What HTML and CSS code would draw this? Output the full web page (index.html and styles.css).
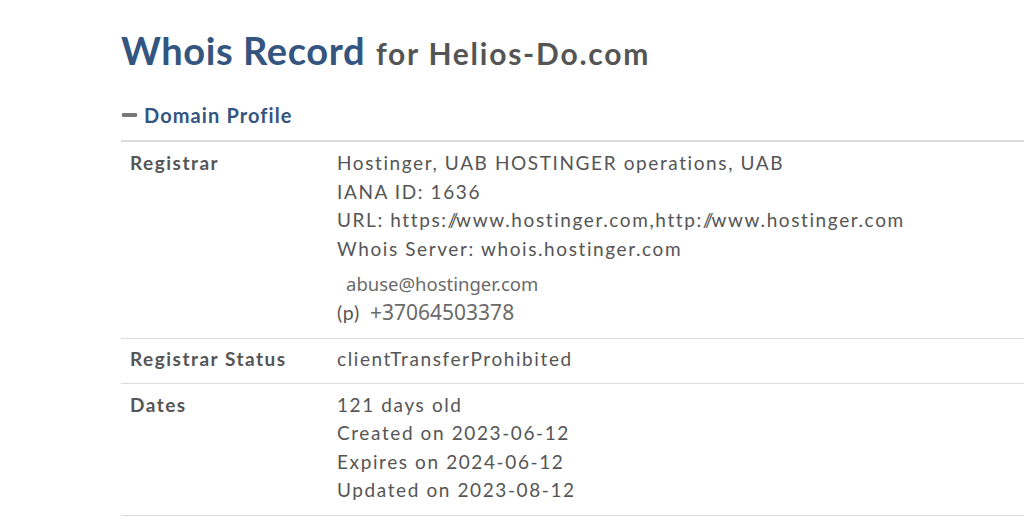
FILE: index.html
```html
<!DOCTYPE html>
<html>
<head>
<meta charset="utf-8">
<link rel="stylesheet" href="styles.css">
</head>
<body>
<div class="page">
  <h1 class="title"><span class="title-main">Whois Record</span> <span class="title-sub">for Helios-Do.com</span></h1>
  <div class="section-head"><span class="dash"></span><span class="section-name">Domain Profile</span></div>
  <div class="table">
    <div class="row row-first">
      <div class="label">Registrar</div>
      <div class="value">
        <div class="line">Hostinger, UAB HOSTINGER operations, UAB</div>
        <div class="line">IANA ID: 1636</div>
        <div class="line">URL: https:<span class="sl">//</span>www.hostinger.com,http:<span class="sl">//</span>www.hostinger.com</div>
        <div class="line">Whois Server: whois.hostinger.com</div>
        <div class="contact email">abuse@hostinger.com</div>
        <div class="contact phone"><span class="p">(p)</span><span class="num">+37064503378</span></div>
      </div>
    </div>
    <div class="row">
      <div class="label">Registrar Status</div>
      <div class="value"><div class="line">clientTransferProhibited</div></div>
    </div>
    <div class="row row-last">
      <div class="label">Dates</div>
      <div class="value">
        <div class="line">121 days old</div>
        <div class="line">Created on 2023-06-12</div>
        <div class="line">Expires on 2024-06-12</div>
        <div class="line">Updated on 2023-08-12</div>
      </div>
    </div>
  </div>
</div>
</body>
</html>
```
FILE: styles.css
```css
html, body {
  margin: 0;
  padding: 0;
  background: #fff;
}
body {
  font-family: Lato, "Liberation Sans", sans-serif;
  color: #555;
  overflow: hidden;
}
.page {
  padding: 26px 0 0 121px;
}
.title {
  margin: 0;
  line-height: 48px;
  font-weight: 700;
  white-space: nowrap;
}
.title-main {
  font-size: 38px;
  letter-spacing: 0.6px;
  color: #34557f;
}
.title-sub {
  font-size: 30px;
  letter-spacing: 1.75px;
  color: #555;
  margin-left: 3px;
}
.section-head {
  display: flex;
  align-items: center;
  margin-top: 26px;
  height: 24px;
}
.dash {
  width: 15px;
  height: 4px;
  background: #777;
  border-radius: 1px;
  margin-right: 7px;
  margin-left: 1px;
}
.section-name {
  font-size: 20px;
  font-weight: 700;
  color: #34557f;
  letter-spacing: 1.1px;
}
.table {
  margin-top: 13px;
  border-top: 2px solid #dcdcdc;
}
.row {
  display: flex;
  padding: 6px 0 9px 9px;
  border-bottom: 1px solid #dcdcdc;
}
.row-first {
  padding-top: 7px;
  padding-bottom: 10px;
}
.row-last {
  padding-top: 7px;
  padding-bottom: 10px;
}
.label {
  width: 207px;
  flex: none;
  font-size: 19px;
  font-weight: 700;
  line-height: 28.5px;
  letter-spacing: 1.5px;
}
.value {
  font-size: 19px;
  line-height: 28.5px;
  letter-spacing: 1.6px;
  white-space: nowrap;
}
.sl {
  letter-spacing: -2.2px;
}
.contact {
  font-family: "Noto Sans", "Open Sans", sans-serif;
  color: #6a6a6a;
  letter-spacing: 0;
}
.email {
  font-size: 18.5px;
  line-height: 26px;
  margin-top: 8px;
  padding-left: 9px;
}
.phone {
  display: flex;
  align-items: baseline;
  line-height: 31px;
}
.p {
  font-family: Lato, sans-serif;
  font-size: 19.5px;
  color: #555;
  letter-spacing: 0.8px;
  width: 33px;
}
.num {
  font-size: 21px;
}
```
